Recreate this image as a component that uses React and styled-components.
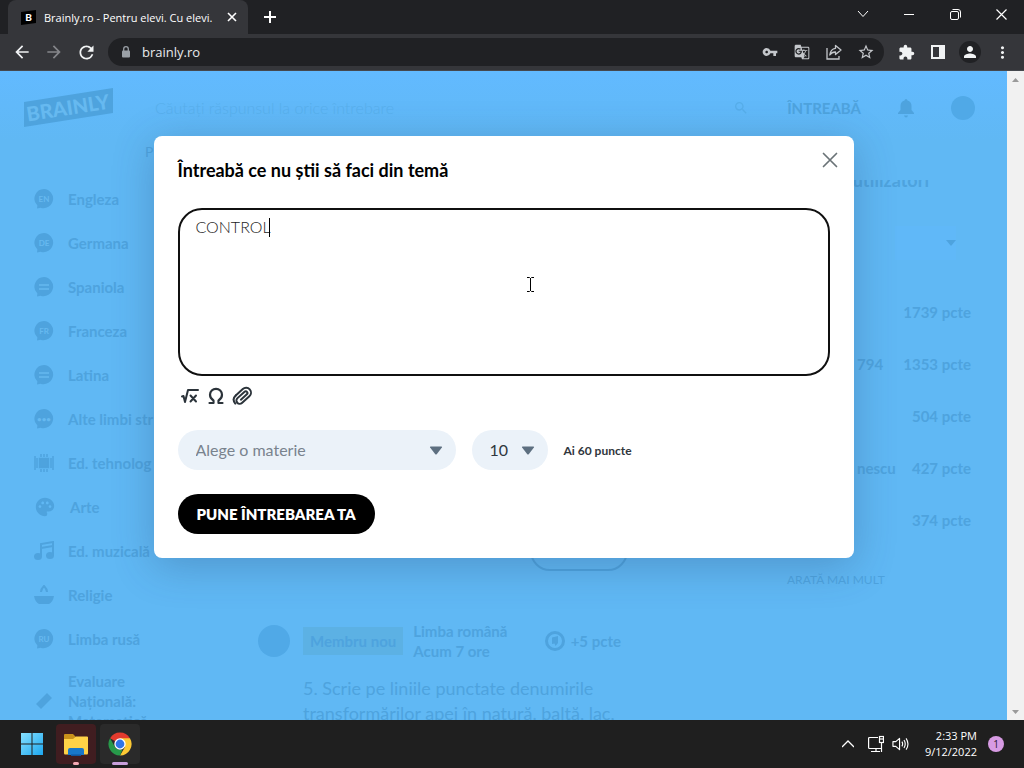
import React from 'react'
import styled, { createGlobalStyle, css } from 'styled-components';
import {
  MdArrowBack, MdArrowForward, MdRefresh, MdVpnKey, MdGTranslate,
  MdStarBorder, MdExtension, MdPerson, MdMoreVert, MdPalette, MdSearch
} from 'react-icons/md';

const ink = "#4ea3de";
const uiFont = `"Open Sans", "Noto Sans", sans-serif`;
const siteFont = `Lato, "Open Sans", sans-serif`;

const GlobalStyle = createGlobalStyle`
* { box-sizing:border-box; }
body { margin:0; font-family:${siteFont}; }
button, input, select, textarea { font-family:inherit; margin:0; }
svg { display:block; flex:none; }
`;

const Screen = styled.div`
height:100vh;
display:flex;
flex-direction:column;
overflow:hidden;
`;

/* ---------- browser window ---------- */

const PlainButton = styled.button`
display:flex;
align-items:center;
justify-content:center;
padding:0;
border:none;
background:none;
color:inherit;
cursor:pointer;
`;

const TitleBar = styled.div`
height:34px;
display:flex;
flex:none;
padding-left:8px;
background:#202124;
color:#fff;
font-family:${uiFont};
`;

const Tab = styled.div`
width:240px;
display:flex;
align-items:center;
gap:8px;
padding:0 10px 0 13px;
border-radius:8px 8px 0 0;
background:#35363a;
font-size:11px;
`;

const TabTitle = styled.span`
flex:1;
white-space:nowrap;
`;

const NewTab = styled(PlainButton)`
width:44px;
`;

const WindowButtons = styled.div`
display:flex;
height:28px;
margin-left:auto;
`;

const WindowButton = styled(PlainButton)`
width:46px;
`;

const ToolBar = styled.div`
height:37px;
display:flex;
flex:none;
align-items:center;
padding:0 6px;
background:#35363a;
border-bottom:1px solid #45484d;
color:#f1f3f4;
font-family:${uiFont};
`;

const ToolButton = styled(PlainButton)`
width:32px;
height:28px;
color:${({ $dim }) => ($dim ? "#85868a" : "inherit")};
`;

const Omnibox = styled.div`
flex:1;
height:28px;
display:flex;
align-items:center;
margin:0 6px;
padding:0 2px 0 13px;
border-radius:14px;
background:#202124;
color:#c4c7cb;
`;

const Address = styled.input`
flex:1;
min-width:0;
padding:0 0 0 11px;
border:none;
outline:none;
background:none;
color:#e8eaed;
font-size:13px;
`;

const Avatar = styled.span`
width:22px;
height:22px;
display:flex;
align-items:center;
justify-content:center;
border-radius:50%;
background:#202124;
`;

const Content = styled.div`
flex:1;
min-height:0;
display:flex;
`;

const ScrollBar = styled.div`
width:17px;
display:flex;
flex-direction:column;
justify-content:space-between;
align-items:center;
padding:7px 0 6px;
background:#f1f1f1;
`;

/* ---------- page behind the dialog ---------- */

const Site = styled.div`
position:relative;
flex:1;
min-width:0;
overflow:hidden;
background:linear-gradient(#62baff, #60b8f4 70px);
color:${ink};
font-size:15px;
font-weight:700;
`;

const Header = styled.header`
height:73px;
display:flex;
align-items:center;
padding:0 32px 0 24px;
`;

const SearchBox = styled.div`
flex:1;
display:flex;
align-items:center;
margin:0 38px 0 42px;
color:#57aeea;
`;

const SearchInput = styled.input`
flex:1;
min-width:0;
padding:0;
border:none;
background:none;
font-size:16px;
font-weight:300;
&::placeholder { color:#57afec; opacity:1; }
`;

const HeaderEnd = styled.div`
display:flex;
align-items:center;
gap:36px;
`;

const AskLink = styled.a`
color:inherit;
text-decoration:none;
`;

const Round = styled.span`
width:${({ $size }) => $size}px;
height:${({ $size }) => $size}px;
flex:none;
border-radius:50%;
background:#50a9e7;
`;

const SiteTabs = styled.div`
height:16px;
padding-left:145px;
font-size:14px;
font-weight:400;
line-height:16px;
`;

const Columns = styled.div`
display:flex;
padding-right:36px;
`;

const Sidebar = styled.nav`
width:258px;
display:flex;
flex:none;
flex-direction:column;
padding:17px 0 0 34px;
`;

const Subject = styled.a`
min-height:44px;
display:flex;
align-items:center;
gap:14px;
padding:10px 0;
color:inherit;
line-height:20px;
text-decoration:none;
white-space:pre-line;
`;

const Feed = styled.main`
width:370px;
display:flex;
flex-direction:column;
`;

const FirstPost = styled.section`
min-height:411px;
display:flex;
align-items:flex-end;
justify-content:flex-end;
`;

const Pill = styled.div`
width:98px;
height:40px;
border:2px solid ${ink};
border-radius:20px;
`;

const Post = styled.article`
margin-top:50px;
`;

const PostHead = styled.div`
height:40px;
display:flex;
align-items:center;
line-height:20px;
white-space:nowrap;
`;

const Rank = styled.span`
margin:0 10px 0 13px;
padding:4px 7px;
background:#5cb1e4;
`;

const Points = styled.span`
display:flex;
align-items:center;
gap:6px;
margin-left:auto;
padding-right:7px;
`;

const Question = styled.p`
margin:15px 0 0 45px;
font-size:18px;
font-weight:400;
line-height:25px;
white-space:pre;
`;

const Aside = styled.aside`
width:184px;
margin-left:auto;
`;

const AsideTitle = styled.div`
height:8px;
display:flex;
align-items:flex-end;
justify-content:flex-end;
margin-top:20px;
padding-right:42px;
overflow:hidden;
font-size:18px;
line-height:16px;
`;

const Period = styled.div`
height:34px;
display:flex;
align-items:center;
justify-content:flex-end;
margin:38px 15px 26px 108px;
background:#60b8f8;
`;

const Ranking = styled.div`
display:flex;
justify-content:space-between;
align-items:center;
height:52px;
padding-left:70px;
`;

const More = styled.a`
display:block;
margin-top:26px;
color:inherit;
font-size:12px;
font-weight:400;
line-height:16px;
text-decoration:none;
`;

/* ---------- dialog ---------- */

const Overlay = styled.div`
position:absolute;
inset:0;
display:flex;
justify-content:center;
align-items:flex-start;
padding:65px 24px 0;
`;

const Dialog = styled.form`
width:700px;
padding:24px;
border-radius:8px;
background:#fff;
box-shadow:0 8px 40px rgba(40, 70, 110, 0.3);
color:#000;
font-weight:400;
`;

const DialogHead = styled.div`
display:flex;
align-items:flex-start;
justify-content:space-between;
height:48px;
`;

const DialogTitle = styled.label`
font-size:18px;
font-weight:700;
line-height:20px;
`;

const CloseButton = styled(PlainButton)`
width:16px;
height:16px;
margin:-8px -8px 0 0;
`;

const Editor = styled.div`
position:relative;
`;

const TextBox = styled.textarea`
display:block;
width:100%;
height:168px;
padding:7px 16px;
border:2px solid #101010;
border-radius:24px;
outline:none;
resize:none;
background:#fff;
color:#1c1c1c;
font-size:16px;
line-height:20px;
font-weight:300;
`;

const Caret = styled.span`
position:absolute;
top:10px;
left:91px;
width:1px;
height:19px;
background:#000;
`;

const Pointer = styled.svg`
position:absolute;
top:69px;
left:348px;
`;

const Tools = styled.div`
display:flex;
align-items:center;
gap:6px;
height:20px;
margin-top:10px;
padding-left:2px;
color:#2b333a;
`;

const Fields = styled.div`
display:flex;
align-items:center;
gap:16px;
margin-top:24px;
`;

const SelectBox = styled.div`
position:relative;
width:${({ $wide }) => ($wide ? 278 : 76)}px;
svg { position:absolute; top:16px; right:13px; pointer-events:none; }
`;

const Select = styled.select`
appearance:none;
width:100%;
height:40px;
padding:0 34px 2px 18px;
border:none;
border-radius:20px;
background:#ebf2f9;
color:${({ $muted }) => ($muted ? "#79838e" : "#2f3740")};
font-size:16px;
`;

const Balance = styled.span`
color:#30363c;
font-size:12px;
font-weight:700;
`;

const Submit = styled.button`
height:40px;
margin-top:24px;
padding:0 19px;
border:none;
border-radius:20px;
background:#000;
color:#fff;
font-size:15px;
font-weight:800;
`;

/* ---------- taskbar ---------- */

const TaskBar = styled.footer`
height:48px;
display:flex;
flex:none;
align-items:center;
padding:0 20px 0 12px;
background:#1f1f1f;
color:#fff;
font-family:${uiFont};
`;

const TaskButton = styled(PlainButton)`
position:relative;
width:40px;
height:40px;
margin-right:4px;
border-radius:4px;
${({ $tone }) => $tone && css`background:${$tone};`}
`;

const Running = styled.span`
position:absolute;
bottom:-1px;
left:50%;
width:${({ $width }) => $width}px;
height:3px;
border-radius:2px;
background:${({ $color }) => $color};
transform:translateX(-50%);
`;

const Tray = styled.div`
display:flex;
align-items:center;
margin-left:auto;
`;

const TrayIcons = styled.div`
display:flex;
align-items:center;
gap:8px;
svg:first-child { margin-right:6px; }
`;

const Clock = styled.div`
margin:0 11px 0 16px;
font-size:11px;
line-height:16px;
text-align:right;
`;

const Count = styled.span`
width:16px;
height:16px;
border-radius:50%;
background:#d79be3;
color:#2a1830;
font-size:10px;
line-height:16px;
text-align:center;
`;

const Triangle = ({ up, width = 7, height = 4, color = "#9a9a9a" }) => (
  <svg width={width} height={height} viewBox="0 0 10 6" preserveAspectRatio="none">
    <path d={up ? "M0 6L5 0L10 6Z" : "M0 0H10L5 6Z"} fill={color} />
  </svg>
);

const DropArrow = () => (
  <svg width="14" height="9" viewBox="0 0 14 9">
    <path d="M1.500.5h11q1 .3.4 1.100L7.700 8.200q-.7.7-1.400 0L1.100 1.600Q.6.8 1.500.5z" fill="#5d6f80" />
  </svg>
);

const Favicon = () => (
  <svg width="15" height="15" viewBox="0 0 15 15">
    <path d="M0 2L15 0V13L0 15Z" fill="#000" />
    <text x="7.500" y="11" textAnchor="middle" fontSize="10" fontWeight="900" fontFamily="Lato" fill="#fff">B</text>
  </svg>
);

const LockIcon = () => (
  <svg width="10" height="12" viewBox="0 0 10 12">
    <rect x="1" y="4.500" width="8" height="7" rx="1" fill="#9aa0a6" />
    <path d="M2.700 5V3a2.300 2.300 0 0 1 4.600 0v2" fill="none" stroke="#9aa0a6" strokeWidth="1.300" />
  </svg>
);

const BrainlyLogo = () => (
  <svg width="89" height="40" viewBox="0 0 89 40">
    <path d="M0 14L89 0V25L0 39Z" fill={ink} />
    <text x="44" y="27" textAnchor="middle" fontSize="20" fontWeight="900" fontFamily="Lato"
      fill="#66b9f0" transform="rotate(-9 44 20)">BRAINLY</text>
  </svg>
);

const Bell = () => (
  <svg width="18" height="20" viewBox="0 0 18 20" fill={ink}>
    <path d="M9 1q1.300 0 1.500 1.500Q14.500 3.800 14.500 8v4l2.500 3v1H1v-1l2.500-3V8q0-4.200 4-5.500Q7.700 1 9 1z" />
    <path d="M7 17.500h4Q10.500 19.500 9 19.500T7 17.500z" />
  </svg>
);

// round speech bubble; shows a country code or two text lines
const Bubble = ({ code }) => (
  <svg width="20" height="20" viewBox="0 0 20 20">
    <path d="M10 0a9.600 9.600 0 1 1-3.500 18.700L3 19.500l.4-3A9.600 9.600 0 0 1 10 0z" fill={ink} />
    {code
      ? <text x="10" y="13" textAnchor="middle" fontSize="8" fontWeight="700" fill="#66b9f0">{code}</text>
      : <path d="M5 8h10M5 12h10" stroke="#66b9f0" strokeWidth="1.500" />}
  </svg>
);

const CoinIcon = () => (
  <svg width="20" height="20" viewBox="0 0 20 20">
    <circle cx="10" cy="10" r="8.500" fill="none" stroke={ink} strokeWidth="3" />
    <path d="M7 6.500l6-1.500v7l-2.500 3-1-2.500-2.500.5z" fill={ink} />
  </svg>
);

const Chip = () => (
  <svg width="20" height="20" viewBox="0 0 20 20" stroke={ink} strokeWidth="1.500">
    <rect x="5.500" y="5.500" width="9" height="9" fill={ink} />
    <path d="M7 1v3M10 1v3M13 1v3M7 16v3M10 16v3M13 16v3M1 3v14M3 5v10M19 3v14M17 5v10" fill="none" />
  </svg>
);

const Bowl = () => (
  <svg width="20" height="20" viewBox="0 0 20 20">
    <path d="M0 11h20q-1 6-5 8H5q-4-2-5-8z" fill={ink} />
    <path d="M7 7q0-3 3-6q3 3 3 6" fill="none" stroke={ink} strokeWidth="2" />
  </svg>
);

const Ticket = () => (
  <svg width="20" height="20" viewBox="0 0 20 20">
    <path d="M13 2l5 5L7 18l-5-5z" fill={ink} />
  </svg>
);

const Notes = () => (
  <svg width="20" height="20" viewBox="0 0 20 20">
    <path d="M7 15V3l12-2v13M7 7l12-2" fill="none" stroke={ink} strokeWidth="2" />
    <ellipse cx="4" cy="15.500" rx="4" ry="3.500" fill={ink} />
    <ellipse cx="16" cy="14.500" rx="4" ry="3.500" fill={ink} />
  </svg>
);

const ShareIcon = () => (
  <svg width="16" height="16" viewBox="0 0 16 16" fill="none" stroke="currentColor" strokeWidth="1.300">
    <path d="M1 4v11h12v-3" />
    <path d="M9.500 1.500L15 6l-5.500 4.500V8Q6 7.800 3.800 11Q4.500 5 9.500 4.300z" strokeLinejoin="round" />
  </svg>
);

const FormulaIcon = () => (
  <svg width="20" height="20" viewBox="0 0 20 20" fill="none" stroke="currentColor" strokeWidth="2" strokeLinecap="round" strokeLinejoin="round">
    <path d="M2 10.500l1.500-.5 1.500 6L8 4h10" />
    <path d="M10.500 9.500l5.500 6M16 9.500l-5.500 6" />
  </svg>
);

const OmegaIcon = () => (
  <svg width="20" height="20" viewBox="0 0 20 20" fill="none" stroke="currentColor" strokeWidth="2.200" strokeLinecap="round" strokeLinejoin="round">
    <path d="M3.500 17H7.500v-2.500Q4 12.500 4 8.800A6 6 0 0 1 16 8.800Q16 12.500 12.500 14.500V17h4" />
  </svg>
);

// three parallel runs of wire, bent at both ends and laid on a slant
const ClipIcon = () => (
  <svg width="22" height="20" viewBox="0 0 22 20" fill="none" stroke="currentColor" strokeWidth="2" strokeLinecap="round">
    <g transform="rotate(-42 11 10)">
      <path d="M6 4.700H15.500a4.800 4.800 0 0 1 0 9.800H5.500a3.300 3.300 0 0 1 0-6.600H15a1.700 1.700 0 0 1 0 3.400H7" />
      <path d="M6 4.700Q.5 4.700.2 10.500" />
    </g>
  </svg>
);

const WindowsLogo = () => (
  <svg width="24" height="24" viewBox="0 0 24 24">
    <defs>
      <linearGradient id="win" x1="0" y1="0" x2="24" y2="24" gradientUnits="userSpaceOnUse">
        <stop offset="0" stopColor="#8be2ff" />
        <stop offset="1" stopColor="#18a5ee" />
      </linearGradient>
    </defs>
    <path d="M1 1h10.500v10.500H1zM12.500 1H23v10.500H12.500zM1 12.500h10.500V23H1zM12.500 12.500H23V23H12.500z" fill="url(#win)" />
  </svg>
);

const FolderIcon = () => (
  <svg width="26" height="24" viewBox="0 0 26 24">
    <path d="M1 3q0-1 1-1h8l3 3h11q1 0 1 1v5H1z" fill="#c9911b" />
    <path d="M1 7h9l3-2.500h11q1 0 1 1V21q0 1.500-1 1.500H2q-1 0-1-1.500z" fill="#ffd247" />
    <path d="M5 23v-5q0-2 2-2h12q2 0 2 2v5z" fill="#1877c9" />
    <path d="M8 22.500h10v1.500H8z" fill="#0f559c" />
  </svg>
);

const ChromeLogo = () => (
  <svg width="24" height="24" viewBox="0 0 24 24">
    <path d="M12 12L2.040 6.250A11.500 11.500 0 0 1 21.960 6.250Z" fill="#e33b2e" />
    <path d="M12 6.200h9.960A11.500 11.500 0 0 1 12 23.500L17 15Z" fill="#fcc934" />
    <path d="M2.040 6.250L7 15q2 3.500 7.500 2.600L12 23.500A11.500 11.500 0 0 1 2.040 6.250z" fill="#27994a" />
    <circle cx="12" cy="12" r="5.700" fill="#fff" />
    <circle cx="12" cy="12" r="4.400" fill="#2f74e6" />
  </svg>
);

const subjects = [
  { name: "Engleza", icon: <Bubble code="EN" /> },
  { name: "Germana", icon: <Bubble code="DE" /> },
  { name: "Spaniola", icon: <Bubble /> },
  { name: "Franceza", icon: <Bubble code="FR" /> },
  { name: "Latina", icon: <Bubble /> },
  { name: "Alte limbi str", icon: <Bubble code="•••" /> },
  { name: "Ed. tehnolog", icon: <Chip /> },
  { name: "Arte", icon: <MdPalette size={22} /> },
  { name: "Ed. muzicală", icon: <Notes /> },
  { name: "Religie", icon: <Bowl /> },
  { name: "Limba rusă", icon: <Bubble code="RU" /> },
  { name: "Evaluare\nNațională:\nMatematică", icon: <Ticket /> },
];

const ranking = [
  { name: "", points: "1739 pcte" },
  { name: "794", points: "1353 pcte" },
  { name: "", points: "504 pcte" },
  { name: "nescu", points: "427 pcte" },
  { name: "", points: "374 pcte" },
];

const BrowserTop = () => {
  return (
    <>
      <TitleBar>
        <Tab>
          <Favicon />
          <TabTitle>Brainly.ro - Pentru elevi. Cu elevi.</TabTitle>
          <PlainButton aria-label="Close tab">
            <svg width="12" height="12" viewBox="0 0 12 12" stroke="#fff" strokeWidth="1.600"><path d="M2 2l8 8M10 2l-8 8" /></svg>
          </PlainButton>
        </Tab>
        <NewTab aria-label="New tab">
          <svg width="12" height="12" viewBox="0 0 12 12" stroke="#fff" strokeWidth="2"><path d="M6 0v12M0 6h12" /></svg>
        </NewTab>
        <WindowButtons>
          <WindowButton aria-label="Search tabs">
            <svg width="12" height="12" viewBox="0 0 12 12" fill="none" stroke="#fff"><path d="M1 3l5 5.500L11 3" /></svg>
          </WindowButton>
          <WindowButton aria-label="Minimize">
            <svg width="10" height="10" viewBox="0 0 10 10" stroke="#fff"><path d="M0 5.500h10" /></svg>
          </WindowButton>
          <WindowButton aria-label="Restore">
            <svg width="11" height="11" viewBox="0 0 11 11" fill="none" stroke="#fff">
              <rect x=".5" y="2.500" width="8" height="8" rx="1.500" />
              <path d="M2.500.5H8q2.500 0 2.500 2.500v5.500" />
            </svg>
          </WindowButton>
          <WindowButton aria-label="Close">
            <svg width="11" height="11" viewBox="0 0 11 11" stroke="#fff" strokeWidth="1.200"><path d="M.5.5l10 10M10.500.5l-10 10" /></svg>
          </WindowButton>
        </WindowButtons>
      </TitleBar>
      <ToolBar>
        <ToolButton aria-label="Back"><MdArrowBack size={20} /></ToolButton>
        <ToolButton aria-label="Forward" $dim><MdArrowForward size={20} /></ToolButton>
        <ToolButton aria-label="Reload"><MdRefresh size={21} /></ToolButton>
        <Omnibox>
          <LockIcon />
          <Address aria-label="Address" defaultValue="brainly.ro" />
          <ToolButton aria-label="Passwords"><MdVpnKey size={16} /></ToolButton>
          <ToolButton aria-label="Translate"><MdGTranslate size={16} /></ToolButton>
          <ToolButton aria-label="Share"><ShareIcon /></ToolButton>
          <ToolButton aria-label="Bookmark"><MdStarBorder size={18} /></ToolButton>
        </Omnibox>
        <ToolButton aria-label="Extensions"><MdExtension size={17} /></ToolButton>
        <ToolButton aria-label="Side panel">
          <svg width="14" height="14" viewBox="0 0 14 14"><path d="M0 0h14v14H0zM2 2v10h6V2z" fill="currentColor" fillRule="evenodd" /></svg>
        </ToolButton>
        <ToolButton aria-label="Profile"><Avatar><MdPerson size={18} /></Avatar></ToolButton>
        <ToolButton aria-label="Menu"><MdMoreVert size={19} /></ToolButton>
      </ToolBar>
    </>
  )
}

const QuestionDialog = () => {
  return (
    <Dialog onSubmit={(e) => e.preventDefault()}>
      <DialogHead>
        <DialogTitle htmlFor="question">Întreabă ce nu știi să faci din temă</DialogTitle>
        <CloseButton type="button" aria-label="Închide">
          <svg width="16" height="16" viewBox="0 0 16 16" stroke="#6a7377" strokeWidth="1.700" strokeLinecap="round"><path d="M1.500 1.500l13 13M14.500 1.500l-13 13" /></svg>
        </CloseButton>
      </DialogHead>
      <Editor>
        <TextBox id="question" defaultValue="CONTROL" spellCheck={false} />
        <Caret />
        <Pointer width="9" height="15" viewBox="0 0 9 15" fill="none" stroke="#000">
          <path d="M1 .5h2.500l1 1 1-1H8M4.500 1v13M1 14.500h2.500l1-1 1 1H8" />
        </Pointer>
      </Editor>
      <Tools>
        <PlainButton type="button" aria-label="Formulă"><FormulaIcon /></PlainButton>
        <PlainButton type="button" aria-label="Simbol"><OmegaIcon /></PlainButton>
        <PlainButton type="button" aria-label="Atașează"><ClipIcon /></PlainButton>
      </Tools>
      <Fields>
        <SelectBox $wide>
          <Select $muted aria-label="Materie"><option>Alege o materie</option></Select>
          <DropArrow />
        </SelectBox>
        <SelectBox>
          <Select aria-label="Puncte"><option>10</option></Select>
          <DropArrow />
        </SelectBox>
        <Balance>Ai 60 puncte</Balance>
      </Fields>
      <Submit>PUNE ÎNTREBAREA TA</Submit>
    </Dialog>
  )
}

const BrainlyPage = () => {
  return (
    <Site>
      <Header>
        <BrainlyLogo />
        <SearchBox>
          <SearchInput aria-label="Caută" placeholder="Căutați răspunsul la orice întrebare" />
          <MdSearch size={16} />
        </SearchBox>
        <HeaderEnd>
          <AskLink href="#intreaba">ÎNTREABĂ</AskLink>
          <Bell />
          <Round $size={24} />
        </HeaderEnd>
      </Header>
      <SiteTabs>P</SiteTabs>
      <Columns>
        <Sidebar>
          {subjects.map((s) => (
            <Subject key={s.name} href="#materie">{s.icon}{s.name}</Subject>
          ))}
        </Sidebar>
        <Feed>
          <FirstPost><Pill /></FirstPost>
          <Post>
            <PostHead>
              <Round $size={32} />
              <Rank>Membru nou</Rank>
              <span>Limba română<br />Acum 7 ore</span>
              <Points><CoinIcon />+5 pcte</Points>
            </PostHead>
            <Question>{"5. Scrie pe liniile punctate denumirile\ntransformărilor apei în natură. baltă, lac,"}</Question>
          </Post>
        </Feed>
        <Aside>
          <AsideTitle>utilizatori</AsideTitle>
          <Period><Triangle width={10} height={6} color={ink} /></Period>
          {ranking.map((r) => (
            <Ranking key={r.points}><span>{r.name}</span><span>{r.points}</span></Ranking>
          ))}
          <More href="#clasament">ARATĂ MAI MULT</More>
        </Aside>
      </Columns>
      <Overlay>
        <QuestionDialog />
      </Overlay>
    </Site>
  )
}

const Bottom = () => {
  return (
    <TaskBar>
      <TaskButton aria-label="Start"><WindowsLogo /></TaskButton>
      <TaskButton aria-label="File Explorer" $tone="#401d20">
        <FolderIcon />
        <Running $width={6} $color="#f4a9b4" />
      </TaskButton>
      <TaskButton aria-label="Chrome" $tone="#2a2a2a">
        <ChromeLogo />
        <Running $width={16} $color="#c9a0dc" />
      </TaskButton>
      <Tray>
        <TrayIcons>
          <svg width="12" height="12" viewBox="0 0 12 12" fill="none" stroke="#fff" strokeWidth="1.300"><path d="M0 9l6-6 6 6" /></svg>
          <svg width="16" height="18" viewBox="0 0 16 18" fill="none" stroke="#fff" strokeWidth="1.200">
            <path d="M10 2.500H1.600q-1 0-1 1v9q0 1 1 1h12M8 13.500v3M3 16.500h9M13.500 8v9" />
            <rect x="11.500" y="1.500" width="4" height="6" />
            <path d="M11.500 4h4" />
          </svg>
          <svg width="17" height="18" viewBox="0 0 18 18" fill="none" stroke="#fff" strokeWidth="1.200">
            <path d="M1 6.500h3L8 3v12l-4-3.500H1z" strokeLinejoin="round" />
            <path d="M10.500 6.500q1.500 2.500 0 5M12.700 4.800q2.600 4.200 0 8.400M14.900 3q4 6 0 12" />
          </svg>
        </TrayIcons>
        <Clock>2:33 PM<br />9/12/2022</Clock>
        <Count>1</Count>
      </Tray>
    </TaskBar>
  )
}

const App = () => {
  return (
    <Screen>
      <GlobalStyle />
      <BrowserTop />
      <Content>
        <BrainlyPage />
        <ScrollBar><Triangle up /><Triangle /></ScrollBar>
      </Content>
      <Bottom />
    </Screen>
  )
}

export default App;
